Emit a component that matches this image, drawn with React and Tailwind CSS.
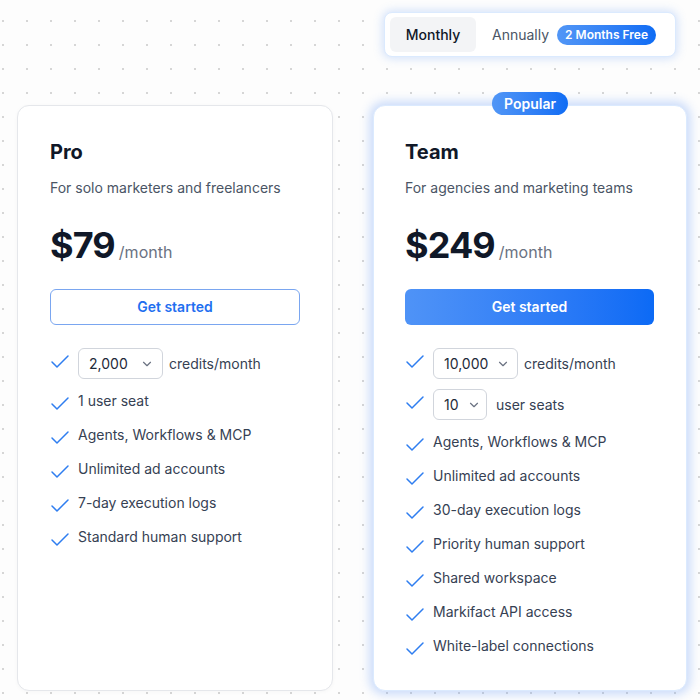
import React, { useState } from 'react';
import { Check, ChevronDown } from 'lucide-react';

const proFeatures = [
  '1 user seat',
  'Agents, Workflows & MCP',
  'Unlimited ad accounts',
  '7-day execution logs',
  'Standard human support',
];

const teamFeatures = [
  'Agents, Workflows & MCP',
  'Unlimited ad accounts',
  '30-day execution logs',
  'Priority human support',
  'Shared workspace',
  'Markifact API access',
  'White-label connections',
];

const Tick = ({ className = '' }) => (
  <Check size={24} strokeWidth={1.5} className={`shrink-0 -ml-0.5 text-[#2f7ef0] ${className}`} />
);

const Select = ({ value, width, inner = 'gap-3' }) => (
  <button
    type="button"
    className={`${width} h-[31px] flex items-center ${inner} pl-2.5 rounded-md border border-gray-300 bg-white text-sm text-gray-800`}
  >
    <span>{value}</span>
    <ChevronDown size={14} strokeWidth={2} className="text-gray-500" />
  </button>
);

const SelectRow = ({ value, width, label, gap = 'gap-1.5', inner }) => (
  <li className="flex items-start gap-1.5">
    <Tick className="mt-0.5 -mb-0.5" />
    <div className={`flex items-center ${gap}`}>
      <Select value={value} width={width} inner={inner} />
      <span>{label}</span>
    </div>
  </li>
);

const TextRow = ({ text }) => (
  <li className="flex items-start gap-1.5 leading-6">
    <Tick className="mt-[3px] -mb-[3px]" />
    <span>{text}</span>
  </li>
);

const App = () => {
  const [period, setPeriod] = useState('monthly');

  return (
    <div
      className="w-[700px] h-[700px] overflow-hidden bg-[#fdfdfd] bg-[radial-gradient(circle,#d6d6d6_1px,transparent_1.3px)] bg-[length:24px_24px] bg-[position:15px_9px] font-['Inter','Noto_Sans',sans-serif]"
    >
      <div className="grid grid-cols-[316px_314px] gap-x-10 pl-[17px]">
        {/* billing toggle */}
        <div />
        <div className="flex justify-center pt-3 h-[105px]">
          <div className="w-[292px] h-[45px] flex items-center gap-4 p-[5px] rounded-lg bg-white border border-blue-100 shadow-[0_0_8px_2px_rgba(96,150,245,0.25)]">
            <button
              type="button"
              onClick={() => setPeriod('monthly')}
              className={`h-[35px] w-[86px] rounded-md text-sm font-medium ${period === 'monthly' ? 'bg-gray-100 text-gray-900' : 'text-gray-600'}`}
            >
              Monthly
            </button>
            <button
              type="button"
              onClick={() => setPeriod('annually')}
              className="flex items-center gap-2 text-sm text-gray-600"
            >
              Annually
              <span className="px-2 h-5 leading-5 rounded-full bg-gradient-to-r from-[#5196f6] to-[#0d6cf4] text-white text-xs font-semibold">
                2 Months Free
              </span>
            </button>
          </div>
        </div>

        {/* Pro */}
        <div className="h-[586px] rounded-xl bg-white border border-gray-200 shadow-[0_1px_4px_rgba(0,0,0,0.03)] px-8 pt-8">
          <h2 className="text-xl leading-7 font-bold text-gray-900">Pro</h2>
          <p className="mt-3 text-sm text-gray-600">For solo marketers and freelancers</p>
          <div className="mt-[27px] flex items-baseline gap-1">
            <span className="text-4xl leading-10 font-bold tracking-tight text-gray-900">$79</span>
            <span className="text-base text-gray-500">/month</span>
          </div>
          <button
            type="button"
            className="mt-6 w-full h-9 rounded-md border border-[#7aa6f0] bg-white text-sm font-semibold text-[#1f6ff0]"
          >
            Get started
          </button>
          <ul className="mt-[23px] flex flex-col gap-2.5 text-sm text-gray-700">
            <SelectRow value="2,000" width="w-[85px]" label="credits/month" />
            {proFeatures.map((f) => (
              <TextRow key={f} text={f} />
            ))}
          </ul>
        </div>

        {/* Team */}
        <div className="relative h-[586px] rounded-xl bg-white border border-blue-100 shadow-[0_0_10px_4px_rgba(96,150,245,0.3)] pl-[31px] pr-8 pt-8">
          <span className="absolute -top-[14px] left-1/2 -translate-x-1/2 h-[23px] px-3 leading-[23px] rounded-full bg-gradient-to-r from-[#5196f6] to-[#0d6cf4] text-white text-sm font-semibold">
            Popular
          </span>
          <h2 className="text-xl leading-7 font-bold text-gray-900">Team</h2>
          <p className="mt-3 text-sm text-gray-600">For agencies and marketing teams</p>
          <div className="mt-[27px] flex items-baseline gap-1">
            <span className="text-4xl leading-10 font-bold tracking-tight text-gray-900">$249</span>
            <span className="text-base text-gray-500">/month</span>
          </div>
          <button
            type="button"
            className="mt-6 w-full h-9 rounded-md bg-gradient-to-r from-[#4f93f7] to-[#0b6af5] text-sm font-semibold text-white"
          >
            Get started
          </button>
          <ul className="mt-[23px] flex flex-col gap-2.5 text-sm text-gray-700">
            <SelectRow value="10,000" width="w-[85px]" label="credits/month" inner="gap-2" />
            <SelectRow value="10" width="w-[54px]" label="user seats" gap="gap-[9px]" inner="gap-2" />
            {teamFeatures.map((f) => (
              <TextRow key={f} text={f} />
            ))}
          </ul>
        </div>
      </div>
    </div>
  );
};

export default App;
